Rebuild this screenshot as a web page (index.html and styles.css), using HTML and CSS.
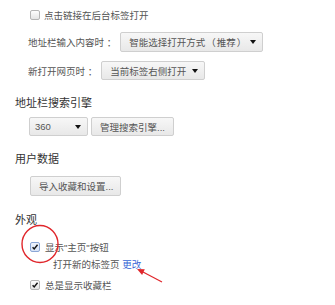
FILE: index.html
```html
<!DOCTYPE html>
<html lang="zh-CN">
<head>
<meta charset="utf-8">
<link rel="stylesheet" href="styles.css">
</head>
<body>
<div class="page">
  <div class="group">
    <div class="check-row r1"><span class="cb"></span><span>点击链接在后台标签打开</span></div>
    <div class="field r2"><span class="label">地址栏输入内容时 ：</span><span class="select w1"><span>智能选择打开方式<span class="paren">（</span>推荐<span class="paren">）</span></span><i class="caret"></i></span></div>
    <div class="field r3"><span class="label">新打开网页时 ：</span><span class="select w2"><span>当前标签右侧打开</span><i class="caret"></i></span></div>
  </div>
  <h3 class="heading h-search">地址栏搜索引擎</h3>
  <div class="group field r4"><span class="select w3"><span>360</span><i class="caret"></i></span><span class="btn w4">管理搜索引擎...</span></div>
  <h3 class="heading h-data">用户数据</h3>
  <div class="group field r5"><span class="btn w5">导入收藏和设置...</span></div>
  <h3 class="heading h-look">外观</h3>
  <div class="group">
    <div class="check-row r6"><span class="cb checked focus"><svg viewBox="0 0 10 10" width="10" height="10"><path d="M2 5.2 L4 7.4 L8.2 2.2" fill="none" stroke="#111" stroke-width="1.8"/></svg></span><span>显示"主页"按钮</span></div>
    <div class="sub r7">打开新的标签页 <span class="link">更改</span></div>
    <div class="check-row r8"><span class="cb checked"><svg viewBox="0 0 10 10" width="10" height="10"><path d="M2 5.2 L4 7.4 L8.2 2.2" fill="none" stroke="#111" stroke-width="1.8"/></svg></span><span>总是显示收藏栏</span></div>
  </div>
  <svg class="annot" width="335" height="305" viewBox="0 0 335 305">
    <ellipse cx="40" cy="244" rx="18" ry="18.5" fill="none" stroke="#e0262b" stroke-width="1.4"/>
    <line x1="162" y1="282" x2="143" y2="272" stroke="#e0262b" stroke-width="1.2"/>
    <polygon points="137,269 144.8,269.3 142.1,274.9" fill="#e0262b"/>
  </svg>
</div>
</body>
</html>
```

FILE: styles.css
```css
html, body {
  margin: 0;
  padding: 0;
  background: #fff;
}
.page {
  position: relative;
  width: 335px;
  height: 305px;
  overflow: hidden;
  font-family: "Liberation Sans", "Noto Sans CJK SC", sans-serif;
  font-size: 9.5px;
  color: #555;
}
.paren {
  padding: 0 1px;
}
.group {
  padding-left: 28px;
}
.check-row {
  display: flex;
  align-items: center;
  height: 14px;
}
.cb {
  box-sizing: border-box;
  width: 10px;
  height: 10px;
  margin-left: 2px;
  margin-right: 4px;
  border: 1px solid #b4b4b4;
  border-radius: 2px;
  background: linear-gradient(#fdfdfd, #e4e4e4);
  display: flex;
  align-items: center;
  justify-content: center;
  flex: none;
}
.cb svg {
  display: block;
}
.cb.checked {
  margin-right: 5px;
}
.cb.focus {
  border-color: #8ba7d6;
  background: linear-gradient(#eef3fc, #d7e3f6);
}
.r1 { margin-top: 8px; }
.field {
  display: flex;
  align-items: center;
}
.label {
  margin-right: 4px;
  white-space: nowrap;
}
.select, .btn {
  box-sizing: border-box;
  height: 19px;
  display: flex;
  align-items: center;
  border: 1px solid #cfcfcf;
  border-radius: 2px;
  background: linear-gradient(#f7f7f7, #e8e8e8);
  color: #555;
  padding: 0 8px;
  white-space: nowrap;
  flex: none;
}
.select {
  justify-content: space-between;
  padding-right: 6px;
}
.caret {
  width: 0;
  height: 0;
  border-left: 3.5px solid transparent;
  border-right: 3.5px solid transparent;
  border-top: 4px solid #111;
}
.r2 { margin-top: 10px; }
.r2 .select { height: 20px; }
.r3 { margin-top: 9px; }
.w1 { width: 143px; }
.w2 { width: 104px; }
.w3 { width: 59px; margin-left: 1px; margin-right: 3px; padding-left: 5px; }
.w4 { width: 83px; }
.w5 { width: 91px; margin-left: 2px; height: 20px; }
.heading {
  margin: 0;
  padding-left: 15px;
  font-size: 11px;
  font-weight: normal;
  color: #333;
  height: 14px;
  line-height: 14px;
}
.h-search { margin-top: 16px; }
.r4 { margin-top: 7px; }
.h-data { margin-top: 16px; }
.r5 { margin-top: 10px; }
.h-look { margin-top: 17px; }
.r6 { margin-top: 13px; }
.sub {
  padding-left: 25px;
  height: 14px;
  line-height: 14px;
  margin-top: 4px;
}
.link {
  color: #3867d6;
}
.r8 { margin-top: 6px; }
.annot {
  position: absolute;
  left: 0;
  top: 0;
  pointer-events: none;
}
```
